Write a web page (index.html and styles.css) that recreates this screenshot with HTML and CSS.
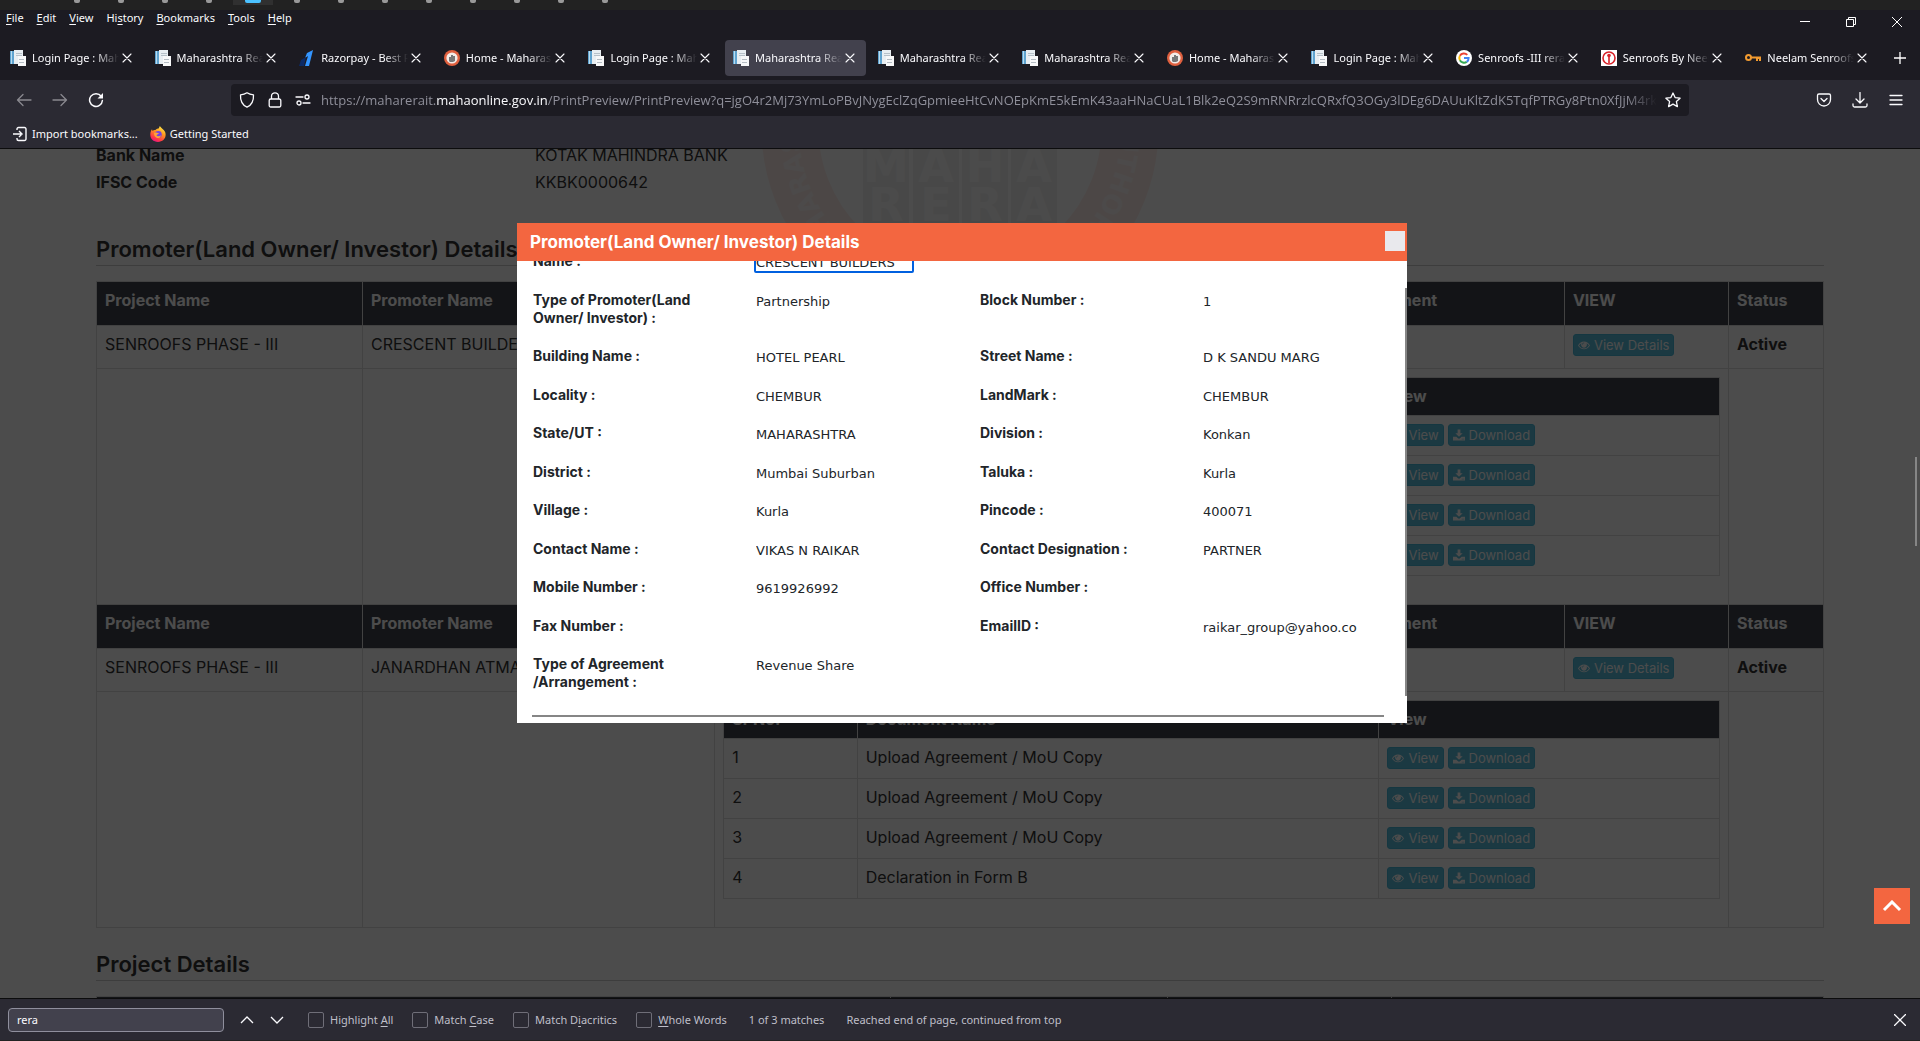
FILE: index.html
```html
<!DOCTYPE html>
<html lang="en">
<head>
<meta charset="utf-8">
<title>Maharashtra Real Estate Regulatory Authority</title>
<link rel="stylesheet" href="styles.css">
</head>
<body>
<svg class="defs" aria-hidden="true">
  <defs>
    <symbol id="i-doc" viewBox="0 0 16 16"><path d="M0 1h4v13H0z" fill="#5fa3cf"/><path d="M1 1h1v13H1z" fill="#b9dcf0"/><path d="M4 0h9v14H4z" fill="#e8eef2"/><path d="M6 3h6v1H6zM6 5h6v1H6z" fill="#b6c1c9"/><path d="M8 6h8v10H8z" fill="#f7f8f9"/><path d="M9 9h5v1H9zM9 12h5v1H9z" fill="#b4bcc3"/></symbol>
    <symbol id="i-razor" viewBox="0 0 16 16"><path d="M8 3l6-3-4 16H6l3-10-3 2z" fill="#3395ff"/><path d="M2 10l5-3-2 9H0z" fill="#0b2a66"/></symbol>
    <symbol id="i-home" viewBox="0 0 16 16"><circle cx="8" cy="8" r="8" fill="#e0603f"/><circle cx="8" cy="8" r="5.6" fill="#f3ece8"/><path d="M5 7h2V5h2v1h2v5l-2 1H6l-1-1z" fill="#777"/></symbol>
    <symbol id="i-google" viewBox="0 0 16 16"><circle cx="8" cy="8" r="8" fill="#fff"/><path d="M11.3 4.9A4.7 4.7 0 0 0 3.9 5.8" fill="none" stroke="#ea4335" stroke-width="2"/><path d="M3.9 5.8a4.6 4.6 0 0 0 0 4.4" fill="none" stroke="#fbbc05" stroke-width="2"/><path d="M3.9 10.2a4.7 4.7 0 0 0 6.8 1.7" fill="none" stroke="#34a853" stroke-width="2"/><path d="M10.7 11.9A4.6 4.6 0 0 0 12.6 8H8" fill="none" stroke="#4285f4" stroke-width="2"/></symbol>
    <symbol id="i-red" viewBox="0 0 16 16"><path d="M0 0h16v16H0z" fill="#fff"/><circle cx="8" cy="8" r="6" fill="none" stroke="#d8232a" stroke-width="1.6"/><circle cx="8" cy="5.5" r="1.8" fill="#d8232a"/><path d="M7.2 6h1.6v7H7.2z" fill="#d8232a"/></symbol>
    <symbol id="i-key" viewBox="0 0 16 16"><circle cx="3.5" cy="7.5" r="2.5" fill="none" stroke="#f29b30" stroke-width="2"/><path d="M6 6.500h10V11h-2V9h-1v2h-2V8.500H6z" fill="#f29b30"/></symbol>
    <symbol id="i-x" viewBox="0 0 16 16"><path d="M4 4l8 8M12 4l-8 8" fill="none" stroke="currentColor" stroke-width="1.1" stroke-linecap="round"/></symbol>
    <symbol id="i-eye" viewBox="0 0 14 12"><path fill="currentColor" fill-rule="evenodd" d="M0 6.500C1.600 3.700 4.100 2 7 2s5.400 1.700 7 4.500C12.400 9.300 9.900 11 7 11S1.600 9.300 0 6.500zM1.200 6.500C2.600 8.700 4.600 10 7 10s4.400-1.300 5.800-3.500A7 7 0 0 0 10 3.900a3.500 3.500 0 1 1-6 0A7 7 0 0 0 1.200 6.500zM5 5.200a.4.4 0 0 0 .8 0c0-.7.500-1.200 1.200-1.200a.4.4 0 0 0 0-.8c-1.100 0-2 .9-2 2z"/></symbol>
    <symbol id="i-save" viewBox="0 0 13 12"><path fill="currentColor" fill-rule="evenodd" d="M5 0h3v4h2.500l-4 4-4-4H5zM0 8h3.700l1.400 1.300a2 2 0 0 0 2.800 0L9.300 8H13v4H0zm9.500 2v1h1v-1zm1.700 0v1h1v-1z"/></symbol>
  </defs>
</svg>

<div class="taskbar" aria-hidden="true">
  <i></i><i></i><i></i><i></i><i class="on"></i><i></i><i></i><i></i><i></i><i></i><i></i><i></i><i></i>
</div>

<header class="titlebar">
  <nav class="menus">
    <a href="#"><u>F</u>ile</a><a href="#"><u>E</u>dit</a><a href="#"><u>V</u>iew</a><a href="#">Hi<u>s</u>tory</a><a href="#"><u>B</u>ookmarks</a><a href="#"><u>T</u>ools</a><a href="#"><u>H</u>elp</a>
  </nav>
  <div class="winbtns">
    <button aria-label="Minimize"><svg width="10" height="10"><path d="M0 4.500h10" stroke="#fff"/></svg></button>
    <button aria-label="Restore"><svg width="10" height="10" fill="none" stroke="#fff"><path d="M.5 2.500h7v7h-7zM2.500 2.500v-2h7v7h-2"/></svg></button>
    <button aria-label="Close"><svg width="10" height="10"><path d="M0 0l10 10M10 0L0 10" stroke="#fff"/></svg></button>
  </div>
</header>

<div class="tabs">
  <div class="tab"><svg><use href="#i-doc"/></svg><span>Login Page : Maharashtra</span><button aria-label="Close tab"><svg><use href="#i-x"/></svg></button></div>
  <div class="tab"><svg><use href="#i-doc"/></svg><span>Maharashtra Real Estate</span><button aria-label="Close tab"><svg><use href="#i-x"/></svg></button></div>
  <div class="tab"><svg><use href="#i-razor"/></svg><span>Razorpay - Best Payment</span><button aria-label="Close tab"><svg><use href="#i-x"/></svg></button></div>
  <div class="tab"><svg><use href="#i-home"/></svg><span>Home - Maharashtra</span><button aria-label="Close tab"><svg><use href="#i-x"/></svg></button></div>
  <div class="tab"><svg><use href="#i-doc"/></svg><span>Login Page : Maharashtra</span><button aria-label="Close tab"><svg><use href="#i-x"/></svg></button></div>
  <div class="tab active"><svg><use href="#i-doc"/></svg><span>Maharashtra Real Estate</span><button aria-label="Close tab"><svg><use href="#i-x"/></svg></button></div>
  <div class="tab"><svg><use href="#i-doc"/></svg><span>Maharashtra Real Estate</span><button aria-label="Close tab"><svg><use href="#i-x"/></svg></button></div>
  <div class="tab"><svg><use href="#i-doc"/></svg><span>Maharashtra Real Estate</span><button aria-label="Close tab"><svg><use href="#i-x"/></svg></button></div>
  <div class="tab"><svg><use href="#i-home"/></svg><span>Home - Maharashtra</span><button aria-label="Close tab"><svg><use href="#i-x"/></svg></button></div>
  <div class="tab"><svg><use href="#i-doc"/></svg><span>Login Page : Maharashtra</span><button aria-label="Close tab"><svg><use href="#i-x"/></svg></button></div>
  <div class="tab"><svg><use href="#i-google"/></svg><span>Senroofs -III rera</span><button aria-label="Close tab"><svg><use href="#i-x"/></svg></button></div>
  <div class="tab"><svg><use href="#i-red"/></svg><span>Senroofs By Neelam</span><button aria-label="Close tab"><svg><use href="#i-x"/></svg></button></div>
  <div class="tab"><svg><use href="#i-key"/></svg><span>Neelam Senroofs</span><button aria-label="Close tab"><svg><use href="#i-x"/></svg></button></div>
  <button class="newtab" aria-label="New tab"><svg width="14" height="14"><path d="M7 1v12M1 7h12" stroke="#fff" stroke-width="1.300"/></svg></button>
</div>

<div class="toolbar">
  <div class="navbtns">
    <button class="dim" aria-label="Back"><svg viewBox="0 0 16 16"><path d="M15 8H1.500M7 2.500L1.500 8 7 13.500"/></svg></button>
    <button class="dim" aria-label="Forward"><svg viewBox="0 0 16 16"><path d="M1 8h13.500M9 2.500L14.500 8 9 13.500"/></svg></button>
    <button aria-label="Reload"><svg viewBox="0 0 16 16"><path d="M13.200 4.300A6.400 6.400 0 1 0 14.400 8.500" stroke-width="1.500"/><path d="M15 1v5.500H9.500z" fill="#fbfbfe" stroke="none"/></svg></button>
  </div>
  <div class="urlbar">
    <svg viewBox="0 0 16 16"><path d="M8 .8c2 1.400 4 1.900 6.500 2 .3 5.600-1.200 10-6.500 12.400C2.700 12.800 1.200 8.400 1.500 2.800 4 2.700 6 2.200 8 .8z"/></svg>
    <svg viewBox="0 0 16 16"><path d="M4.500 7V4.300a3.500 3.500 0 0 1 7 0V7M3.700 7h8.600a1.500 1.500 0 0 1 1.500 1.500v5a1.500 1.500 0 0 1-1.500 1.500H3.700a1.500 1.500 0 0 1-1.500-1.500v-5A1.500 1.500 0 0 1 3.700 7z"/></svg>
    <svg viewBox="0 0 16 16"><path d="M1 5h7M8 11h7"/><circle cx="12" cy="5" r="2"/><circle cx="4" cy="11" r="2"/></svg>
    <div class="url">https://maharerait.<b>mahaonline.gov.in</b>/PrintPreview/PrintPreview?q=jgO4r2Mj73YmLoPBvJNygEclZqGpmieeHtCvNOEpKmE5kEmK43aaHNaCUaL1Blk2eQ2S9mRNRrzlcQRxfQ3OGy3lDEg6DAUuKltZdK5TqfPTRGy8Ptn0XfJjM4rk</div>
    <button aria-label="Bookmark this page"><svg viewBox="0 0 16 16"><path d="M8 1l2.100 4.600 5 .6-3.700 3.400 1 5L8 12.100l-4.400 2.500 1-5L.9 6.200l5-.6z"/></svg></button>
  </div>
  <div class="actions">
    <button aria-label="Save to Pocket"><svg viewBox="0 0 16 16"><path d="M3 2h10a1.500 1.500 0 0 1 1.500 1.500V7.500a6.500 6.500 0 0 1-13 0V3.500A1.500 1.500 0 0 1 3 2zM5 6.500l3 3 3-3"/></svg></button>
    <button aria-label="Downloads"><svg viewBox="0 0 16 16"><path d="M8 .5v10M4 7l4 4 4-4M1 12v1.500A1.500 1.500 0 0 0 2.500 15h11a1.500 1.500 0 0 0 1.500-1.500V12"/></svg></button>
    <button aria-label="Menu"><svg viewBox="0 0 16 16"><path d="M2 3.500h12M2 8h12M2 12.500h12"/></svg></button>
  </div>
</div>

<nav class="bookmarks">
  <a href="#"><svg viewBox="0 0 16 16" fill="none" stroke="#fbfbfe" stroke-width="1.400"><path d="M5 4V3a1.500 1.500 0 0 1 1.500-1.500h6A1.500 1.500 0 0 1 14 3v10a1.500 1.500 0 0 1-1.500 1.500h-6A1.500 1.500 0 0 1 5 13v-1M1 8h8M7 5l3 3-3 3"/></svg>Import bookmarks...</a>
  <a href="#"><svg viewBox="0 0 16 16"><defs><linearGradient id="fx" x1=".8" y1="0" x2=".3" y2="1"><stop offset="0" stop-color="#fff44f"/><stop offset=".4" stop-color="#ff9a1f"/><stop offset=".8" stop-color="#ff3647"/><stop offset="1" stop-color="#e31587"/></linearGradient></defs><path d="M10 0c.5 2 4 3 5.300 6.500C16.800 12 13 16 8 16S0 12.500.3 8C.4 6 1 4.500 2 3.200l.6 1.700C3.500 4 4.500 3.900 5.400 4.100 6.500 3 8 2.400 9 2.300 9 1.400 9.400.5 10 0z" fill="url(#fx)"/><circle cx="8.300" cy="8.500" r="3.400" fill="#7543e3"/><path d="M4 7c2-1 3 .3 5 .2-.5 1.300-2 1-2.500 2 .7 1.500 3 1.500 4.500 0C10.500 12 8 12.700 6.200 11.500 4.700 10.500 4 9 4 7z" fill="#ffa436"/></svg>Getting Started</a>
</nav>

<main class="viewport">
  <svg class="seal" viewBox="0 0 400 400" aria-hidden="true">
    <circle cx="200" cy="200" r="170" fill="none" stroke="#f36640" stroke-opacity=".1" stroke-width="57"/>
    <path d="M103 172h46v148h-46zM153 172h46v148h-46zM202 172h46v148h-46zM251 172h46v148h-46z" fill="#000" fill-opacity=".05"/>
    <path id="ring" d="M200 39a161 161 0 0 1 0 322a161 161 0 0 1 0-322" fill="none"/>
    <text class="sealring"><textPath href="#ring" startOffset="256">UTHORITY</textPath></text>
    <text class="sealring"><textPath href="#ring" startOffset="606">MAHARASHTRA</textPath></text>
    <g class="sealtext"><text x="126" y="254">M</text><text x="176" y="254">A</text><text x="225" y="254">H</text><text x="274" y="254">A</text><text x="126" y="293">R</text><text x="176" y="293">E</text><text x="225" y="293">R</text><text x="274" y="293">A</text></g>
  </svg>
  <div class="page">
    <dl class="facts">
      <dt>Bank Name</dt><dd>KOTAK MAHINDRA BANK</dd>
      <dt>IFSC Code</dt><dd>KKBK0000642</dd>
    </dl>
    <h2>Promoter(Land Owner/ Investor) Details</h2>
    <table class="grid promoters">
      <colgroup><col class="c1"><col class="c2"><col class="c3"><col class="c4"><col class="c5"><col class="c6"></colgroup>
      <tr class="head"><th>Project Name</th><th>Promoter Name</th><th>Promoter Type</th><th>Type of Agreement/ Arrangement</th><th>VIEW</th><th>Status</th></tr>
      <tr class="line"><td>SENROOFS PHASE - III</td><td>CRESCENT BUILDERS</td><td></td><td></td><td><button class="btn"><svg><use href="#i-eye"/></svg>View Details</button></td><td><b>Active</b></td></tr>
      <tr><td></td><td></td><td colspan="3">
        <table class="grid docs">
          <colgroup><col class="d1"><col class="d2"><col class="d3"></colgroup>
          <tr><th>Sr No.</th><th>Document Name</th><th>View</th></tr>
          <tr><td>1</td><td></td><td><button class="btn"><svg><use href="#i-eye"/></svg>View</button><button class="btn"><svg><use href="#i-save"/></svg>Download</button></td></tr>
          <tr><td>2</td><td></td><td><button class="btn"><svg><use href="#i-eye"/></svg>View</button><button class="btn"><svg><use href="#i-save"/></svg>Download</button></td></tr>
          <tr><td>3</td><td></td><td><button class="btn"><svg><use href="#i-eye"/></svg>View</button><button class="btn"><svg><use href="#i-save"/></svg>Download</button></td></tr>
          <tr><td>4</td><td></td><td><button class="btn"><svg><use href="#i-eye"/></svg>View</button><button class="btn"><svg><use href="#i-save"/></svg>Download</button></td></tr>
        </table>
      </td><td></td></tr>
      <tr class="head"><th>Project Name</th><th>Promoter Name</th><th>Promoter Type</th><th>Type of Agreement/ Arrangement</th><th>VIEW</th><th>Status</th></tr>
      <tr class="line"><td>SENROOFS PHASE - III</td><td>JANARDHAN ATMARAM</td><td></td><td></td><td><button class="btn"><svg><use href="#i-eye"/></svg>View Details</button></td><td><b>Active</b></td></tr>
      <tr><td></td><td></td><td colspan="3">
        <table class="grid docs">
          <colgroup><col class="d1"><col class="d2"><col class="d3"></colgroup>
          <tr><th>Sr No.</th><th>Document Name</th><th>View</th></tr>
          <tr><td>1</td><td>Upload Agreement / MoU Copy</td><td><button class="btn"><svg><use href="#i-eye"/></svg>View</button><button class="btn"><svg><use href="#i-save"/></svg>Download</button></td></tr>
          <tr><td>2</td><td>Upload Agreement / MoU Copy</td><td><button class="btn"><svg><use href="#i-eye"/></svg>View</button><button class="btn"><svg><use href="#i-save"/></svg>Download</button></td></tr>
          <tr><td>3</td><td>Upload Agreement / MoU Copy</td><td><button class="btn"><svg><use href="#i-eye"/></svg>View</button><button class="btn"><svg><use href="#i-save"/></svg>Download</button></td></tr>
          <tr><td>4</td><td>Declaration in Form B</td><td><button class="btn"><svg><use href="#i-eye"/></svg>View</button><button class="btn"><svg><use href="#i-save"/></svg>Download</button></td></tr>
        </table>
      </td><td></td></tr>
    </table>
    <h2>Project Details</h2>
    <table class="grid project">
      <colgroup><col class="p1"><col class="p2"><col class="p3"><col class="p4"></colgroup>
      <tr class="head"><th></th><th></th><th></th><th></th></tr>
    </table>
  </div>

  <div class="overlay">
    <section class="modal" role="dialog" aria-label="Promoter(Land Owner/ Investor) Details">
      <div class="modal-head"><h3>Promoter(Land Owner/ Investor) Details</h3><button aria-label="Close dialog"></button></div>
      <div class="modal-body">
        <form class="fields">
          <label for="f1">Name :</label><input id="f1" class="focus" readonly value="CRESCENT BUILDERS"><span></span><span></span>
          <label for="f2">Type of Promoter(Land Owner/ Investor) :</label><input id="f2" readonly value="Partnership"><label for="f3">Block Number :</label><input id="f3" readonly value="1">
          <label for="f4">Building Name :</label><input id="f4" readonly value="HOTEL PEARL"><label for="f5">Street Name :</label><input id="f5" readonly value="D K SANDU MARG">
          <label for="f6">Locality :</label><input id="f6" readonly value="CHEMBUR"><label for="f7">LandMark :</label><input id="f7" readonly value="CHEMBUR">
          <label for="f8">State/UT :</label><input id="f8" readonly value="MAHARASHTRA"><label for="f9">Division :</label><input id="f9" readonly value="Konkan">
          <label for="f10">District :</label><input id="f10" readonly value="Mumbai Suburban"><label for="f11">Taluka :</label><input id="f11" readonly value="Kurla">
          <label for="f12">Village :</label><input id="f12" readonly value="Kurla"><label for="f13">Pincode :</label><input id="f13" readonly value="400071">
          <label for="f14">Contact Name :</label><input id="f14" readonly value="VIKAS N RAIKAR"><label for="f15">Contact Designation :</label><input id="f15" readonly value="PARTNER">
          <label for="f16">Mobile Number :</label><input id="f16" readonly value="9619926992"><label for="f17">Office Number :</label><input id="f17" readonly value="">
          <label for="f18">Fax Number :</label><input id="f18" readonly value=""><label for="f19">EmailID :</label><input id="f19" readonly value="raikar_group@yahoo.co">
          <label for="f20">Type of Agreement /Arrangement :</label><input id="f20" readonly value="Revenue Share"><span></span><span></span>
        </form>
        <div class="hbar"></div>
        <div class="vbar"></div>
      </div>
    </section>
  </div>
  <button class="totop" aria-label="Back to top"><svg width="20" height="12"><path d="M2 10l8-8 8 8" fill="none" stroke="#fff" stroke-width="3"/></svg></button>
  <div class="pagebar"></div>
</main>

<footer class="findbar">
  <input class="find" aria-label="Find in page" value="rera">
  <div class="arrows">
    <button aria-label="Previous"><svg width="14" height="10"><path d="M1 8l6-6 6 6"/></svg></button>
    <button aria-label="Next"><svg width="14" height="10"><path d="M1 2l6 6 6-6"/></svg></button>
  </div>
  <label><input type="checkbox"><span>Highlight <u>A</u>ll</span></label>
  <label><input type="checkbox"><span>Match <u>C</u>ase</span></label>
  <label><input type="checkbox"><span>Match D<u>i</u>acritics</span></label>
  <label><input type="checkbox"><span><u>W</u>hole Words</span></label>
  <span class="status">1 of 3 matches</span>
  <span class="status">Reached end of page, continued from top</span>
  <button class="closefind" aria-label="Close find bar"><svg width="12" height="12"><path d="M0 0l12 12M12 0L0 12"/></svg></button>
</footer>
</body>
</html>
```
FILE: styles.css
```css
* { box-sizing: border-box; }

body {
  margin: 0;
  height: 100vh;
  display: flex;
  flex-direction: column;
  overflow: hidden;
  background: #1c1b22;
  color: #fbfbfe;
  font: 11px/16px "Noto Sans", "Open Sans", sans-serif;
}

a { color: inherit; text-decoration: none; }
button { margin: 0; padding: 0; border: 0; background: none; color: inherit; font: inherit; }
.defs { display: none; }

/* strip above the browser window */
.taskbar {
  height: 10px;
  flex: none;
  display: flex;
  gap: 4px;
  padding-left: 57px;
  background: #222;
}
.taskbar i { width: 40px; height: 5px; display: flex; justify-content: center; }
.taskbar i::before { content: ""; width: 6px; height: 3px; background: #999; border-radius: 0 0 2px 2px; }
.taskbar .on { background: #303030; }
.taskbar .on::before { width: 16px; background: #4cc2ff; }

.titlebar { height: 30px; flex: none; display: flex; justify-content: space-between; align-items: flex-start; }
.menus { display: flex; gap: 13px; padding: 0 6px; }
.menus a, .bookmarks a { white-space: nowrap; }
u { text-underline-offset: 2px; }
.winbtns { display: flex; }
.winbtns button { width: 46px; height: 24px; display: grid; place-items: center; }

.tabs { height: 40px; flex: none; display: flex; align-items: flex-start; }
.tab {
  flex: 1 1 0;
  min-width: 0;
  height: 36px;
  margin: 0 2px;
  padding: 0 8px;
  display: flex;
  align-items: center;
  border-radius: 4px;
}
.tab.active { background: #42414d; }
.tab svg { width: 16px; height: 16px; flex: none; display: block; }
.tab span {
  flex: 1;
  margin-left: 6px;
  overflow: hidden;
  white-space: nowrap;
  mask-image: linear-gradient(to left, transparent, #000 24px);
}
.tab button { width: 16px; height: 16px; flex: none; }
.newtab { width: 40px; height: 36px; flex: none; display: grid; place-items: center; }

.toolbar { height: 40px; flex: none; display: flex; align-items: center; background: #2b2a33; }
.toolbar svg { width: 16px; height: 16px; display: block; fill: none; stroke: #fbfbfe; stroke-width: 1.3; stroke-linecap: round; stroke-linejoin: round; }
.navbtns { width: 231px; padding-left: 16px; display: flex; gap: 20px; flex: none; }
.dim { opacity: .45; }
.urlbar {
  flex: 1;
  min-width: 0;
  height: 32px;
  padding: 0 8px;
  display: flex;
  align-items: center;
  gap: 12px;
  border-radius: 4px;
  background: #1c1b22;
}
.urlbar svg { flex: none; }
.url {
  flex: 1;
  margin: 0 -4px 0 -2px;
  overflow: hidden;
  white-space: nowrap;
  color: #8f8f9a;
  font: 13px/20px "Open Sans", sans-serif;
  mask-image: linear-gradient(to left, transparent, #000 32px);
}
.url b { font-weight: 400; color: #fbfbfe; }
.actions { width: 231px; padding-right: 16px; display: flex; justify-content: flex-end; gap: 20px; flex: none; }

.bookmarks {
  height: 29px;
  flex: none;
  display: flex;
  gap: 12px;
  padding: 6px 12px 0;
  background: #2b2a33;
  border-bottom: 1px solid #0c0c0d;
}
.bookmarks a { display: flex; gap: 4px; }
.bookmarks svg { width: 16px; height: 16px; }

/* web page */
.viewport {
  flex: 1;
  min-height: 0;
  position: relative;
  overflow: hidden;
  background: #fff;
  color: #333;
  font: 16px/20px Inter, "Open Sans", sans-serif;
}
.seal { position: absolute; left: calc(50% - 200px); top: -221px; width: 400px; height: 400px; }
.sealring { font: 700 26px "DejaVu Sans", sans-serif; fill: #fff; fill-opacity: .6; }
.sealtext { font: 700 46px "DejaVu Sans", sans-serif; fill: #fff; fill-opacity: .8; text-anchor: middle; }
.page { position: relative; margin-top: -7px; padding: 0 5%; }
.facts { margin: 0; display: grid; grid-template-columns: 1fr 3fr; line-height: 27px; }
.facts dt { font-weight: 700; }
.facts dd { margin: 0; padding-left: 7px; }
h2 {
  margin: 41px 0 15px;
  padding-bottom: 4px;
  border-bottom: 1px solid #ccc;
  font-size: 22px;
  line-height: 24px;
  font-weight: 600;
}
.grid { width: 100%; table-layout: fixed; border-collapse: collapse; }
.grid th, .grid td { padding: 8px; border: 1px solid #ddd; text-align: left; vertical-align: top; white-space: nowrap; }
.grid th { background: #40454e; color: #fff; font-weight: 700; }
.head { height: 44px; }
.line { height: 43px; }
.grid .docs { margin-bottom: 20px; }
.grid .docs th { height: 38px; }
.grid .docs td { height: 40px; }
.promoters + h2 { margin-top: 24px; }
.c1 { width: 15.4%; } .c2 { width: 20.4%; } .c3 { width: 26.1%; } .c4 { width: 23.1%; } .c5 { width: 9.5%; } .c6 { width: 5.5%; }
.d1 { width: 13.4%; } .d2 { width: 52.4%; } .d3 { width: 34.2%; }
.p1 { width: 46%; } .p2 { width: 16%; } .p3 { width: 13%; } .p4 { width: 25%; }
.btn {
  height: 22px;
  margin: 0 4px 0 0;
  padding: 0 4px;
  display: inline-flex;
  align-items: center;
  gap: 4px;
  vertical-align: top;
  border: 1px solid #46b8da;
  border-radius: 3px;
  background: #5bc0de;
  color: #fff;
  font-size: 13px;
  line-height: 18px;
}
.btn svg { width: 12px; height: 12px; }

.overlay {
  position: absolute;
  inset: 0;
  display: flex;
  justify-content: center;
  align-items: flex-start;
  padding: 74px 0 0 4px;
  background: rgba(0, 0, 0, .7);
}
.modal { width: 890px; max-width: 96%; height: 500px; display: flex; flex-direction: column; background: #fff; color: #212529; }
.modal-head { height: 38px; flex: none; padding: 0 2px 0 13px; display: flex; align-items: center; justify-content: space-between; background: #f36640; color: #fff; }
.modal-head h3 { margin: 0; font-size: 17px; font-weight: 700; }
.modal-head button { width: 20px; height: 20px; margin-bottom: 2px; background: #e9e9ed; }
.modal-body { position: relative; flex: 1; min-height: 0; overflow: hidden; }
.fields {
  height: 442px;
  margin-top: -9px;
  padding-left: 16px;
  display: grid;
  grid-template-columns: 221fr 226fr 221fr 206fr;
  align-content: space-between;
  align-items: start;
  font-size: 14px;
  line-height: 18px;
}
.fields label { font-weight: 700; max-width: 180px; padding-bottom: 3px; }
.fields input {
  width: 160px;
  height: 21px;
  padding: 0;
  border: 2px solid transparent;
  background: none;
  color: #212529;
  font: 13px/17px "DejaVu Sans", sans-serif;
}
.fields input.focus { border-color: #0060df; border-radius: 2px; outline: 0; }
.hbar { position: absolute; left: 15px; right: 23px; bottom: 6px; height: 2px; background: #868686; }
.vbar { position: absolute; right: 0; top: 27px; bottom: 27px; width: 2px; background: #868686; }
.totop { position: absolute; right: 10px; bottom: 74px; width: 36px; height: 36px; display: grid; place-items: center; background: #f36640; }
.pagebar { position: absolute; right: 3px; top: 308px; width: 2px; height: 89px; background: #868686; }

.findbar {
  height: 43px;
  flex: none;
  display: flex;
  align-items: center;
  padding: 0 14px 0 8px;
  border-top: 1px solid #0c0c0d;
  border-bottom: 1px solid #222;
  background: #2b2a33;
  color: #bfbfc9;
}
.find { width: 216px; height: 24px; padding: 0 8px; border: 1px solid #8f8f9d; border-radius: 4px; background: #42414d; color: #fbfbfe; font: inherit; }
.arrows { display: flex; gap: 16px; margin: 0 24px 0 16px; }
.arrows svg, .closefind svg { display: block; fill: none; stroke: #fbfbfe; stroke-width: 1.3; }
.findbar label { display: flex; align-items: center; gap: 6px; margin-right: 19px; white-space: nowrap; }
.findbar input[type="checkbox"] { appearance: none; width: 16px; height: 16px; margin: 0; border: 1px solid #6f6e78; border-radius: 2px; }
.status { margin: 0 19px 0 3px; white-space: nowrap; }
.closefind { margin-left: auto; }
```
